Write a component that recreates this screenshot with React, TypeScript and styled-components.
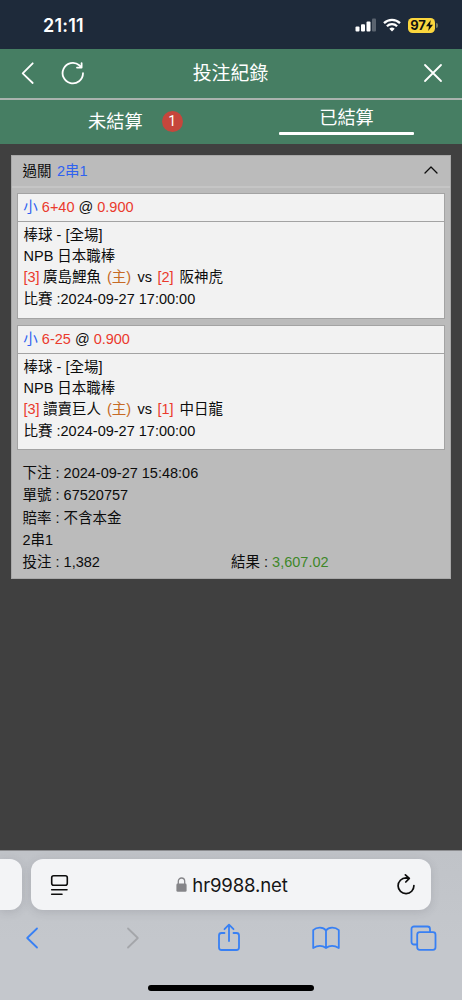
import React from "react";
import styled, { createGlobalStyle } from "styled-components";

const Global = createGlobalStyle`
  * { box-sizing: border-box; }
  body { margin: 0; background: #404040; }
`;

const Screen = styled.div`
  width: 462px;
  height: 1000px;
  display: flex;
  flex-direction: column;
  overflow: hidden;
  background: #404040;
  font-family: "Liberation Sans", "Noto Sans CJK TC", sans-serif;
  color: #0c0c0c;
`;

const StatusBar = styled.div`
  height: 49px;
  flex: none;
  display: flex;
  align-items: center;
  background: #1e2a3a;
  padding: 1px 24px 0 43px;
`;

const Clock = styled.span`
  flex: 1;
  color: #fff;
  font-family: Inter, sans-serif;
  font-size: 18px;
  font-weight: 600;
  letter-spacing: 0.2px;
`;

const SignalIcon = styled.svg`
  margin-right: 7px;
  flex: none;
`;

const Battery = styled.div`
  display: flex;
  align-items: center;
  justify-content: center;
  width: 27px;
  height: 15px;
  margin-left: 7px;
  border-radius: 4.5px;
  background: #fbd63d;
  color: #111;
  font: 700 13px Inter, sans-serif;
  letter-spacing: -0.2px;
`;

const Nub = styled.div`
  width: 2px;
  height: 5px;
  margin-left: 1px;
  border-radius: 0 2px 2px 0;
  background: #777b62;
`;

const NavBar = styled.header`
  height: 49px;
  flex: none;
  display: flex;
  align-items: center;
  gap: 26px;
  background: #467e63;
  padding: 0 19px 1px 21px;
`;

const NavTitle = styled.h1`
  flex: 1;
  margin: 0;
  padding: 2px 47px 0 0;
  text-align: center;
  color: #fff;
  font-size: 18.9px;
  font-weight: 400;
  line-height: 28px;
`;

const Tabs = styled.nav`
  height: 46px;
  flex: none;
  display: flex;
  background: #467e63;
  border-top: 2px solid #a9b3ae;
`;

const Tab = styled.div<{ $active?: boolean }>`
  width: 231px;
  display: flex;
  flex-direction: ${(p) => (p.$active ? "column" : "row")};
  align-items: ${(p) => (p.$active ? "center" : "flex-start")};
  padding: ${(p) => (p.$active ? "4px 0 0" : "8px 0 0 88px")};
  color: #fff;
  font-size: 18.2px;
  line-height: 28px;
`;

const Underline = styled.div`
  width: 135px;
  height: 3px;
  border-radius: 1px;
  background: #fff;
`;

const Badge = styled.span`
  width: 21px;
  height: 21px;
  margin: 3px 0 0 19px;
  border-radius: 50%;
  background: #c6463c;
  font: 14px/21px Roboto, sans-serif;
  text-align: center;
`;

const Panel = styled.main`
  margin: 11px 11px 0;
  height: 424px;
  flex: none;
  display: flex;
  flex-direction: column;
  background: #bbb;
  border: 1px solid #a8a8a8;
  font-size: 14.5px;
`;

const PanelHead = styled.div`
  height: 32px;
  flex: none;
  display: flex;
  align-items: center;
  justify-content: space-between;
  padding: 0 12px 2px 10.5px;
  border-bottom: 2px solid #c5c5c5;
  white-space: pre;
`;

const HeadLabel = styled.span`
  display: flex;
  gap: 5.5px;
  padding-bottom: 2px;
`;

const BetCard = styled.section`
  margin: 5px 5px 0;
  height: 126px;
  flex: none;
  background: #f2f2f2;
  border: 1px solid #a3a3a3;
  white-space: pre;
  & + & { margin-top: 6px; height: 125px; }
`;

const BetHead = styled.div`
  height: 28px;
  padding: 0 5.3px;
  border-bottom: 1px solid #a3a3a3;
  line-height: 27px;
`;

const BetBody = styled.div`
  padding: 3px 5.5px;
`;

const Line = styled.div<{ $h: number }>`
  display: flex;
  height: ${(p) => p.$h}px;
  line-height: ${(p) => p.$h}px;
`;

const tones = { red: "#ea3a2d", blue: "#2f62f0", orange: "#c66a25", green: "#3e8729" };

const Tint = styled.span<{ $tone: keyof typeof tones }>`
  color: ${(p) => tones[p.$tone]};
`;

const Seg = styled.span<{ $w: number }>`
  width: ${(p) => p.$w}px;
  flex: none;
`;

const Summary = styled.div`
  padding: 12px 10.5px 0;
  white-space: pre;
`;

const Browser = styled.footer`
  margin-top: auto;
  height: 150px;
  flex: none;
  display: flex;
  flex-direction: column;
  align-items: center;
  border-top: 1px solid #8c8d90;
  background: linear-gradient(#c0c3c8, #c4c7cc 60%);
`;

const AddressRow = styled.div`
  width: 462px;
  display: flex;
  gap: 9px;
  padding-top: 8px;
`;

const PreviousTab = styled.div`
  width: 22px;
  height: 51px;
  border-radius: 0 12px 12px 0;
  background: #f3f4f6;
  box-shadow: 0 2px 10px rgba(60, 65, 75, 0.16);
`;

const AddressBar = styled.div`
  width: 400px;
  height: 51px;
  display: flex;
  align-items: center;
  justify-content: space-between;
  padding: 0 15px 0 19px;
  border-radius: 12px;
  background: #f3f4f6;
  box-shadow: 0 2px 10px rgba(60, 65, 75, 0.16);
`;

const Host = styled.div`
  display: flex;
  align-items: center;
  gap: 5px;
  padding-right: 1px;
  color: #161616;
  font: 18.6px Inter, sans-serif;
  letter-spacing: -0.15px;
`;

const Toolbar = styled.div`
  width: 462px;
  height: 55px;
  display: grid;
  grid-template-columns: 64px 137px 56px 138px 57px;
  align-items: center;
  justify-items: center;
`;

const HomeIndicator = styled.div`
  width: 166px;
  height: 6px;
  margin-top: 20px;
  border-radius: 3px;
  background: #000;
`;

const Stroke = styled.svg`
  flex: none;
  fill: none;
  stroke: currentColor;
  stroke-linecap: round;
  stroke-linejoin: round;
`;

const BlueStroke = styled(Stroke)<{ $muted?: boolean }>`
  color: ${(p) => (p.$muted ? "#a4a6aa" : "#3880f4")};
  stroke-width: 1.8;
`;

const NavStroke = styled(Stroke)`
  color: #fff;
  stroke-width: 1.8;
`;

type Bet = { line: string; home: string; homeNo: number; away: string; awayNo: number };

const bets: Bet[] = [
  { line: "6+40", homeNo: 3, home: "廣島鯉魚", awayNo: 2, away: "阪神虎" },
  { line: "6-25", homeNo: 3, home: "讀賣巨人", awayNo: 1, away: "中日龍" },
];

function BetItem({ bet }: { bet: Bet }) {
  return (
    <BetCard>
      <BetHead>
        <Tint $tone="blue">小</Tint> <Tint $tone="red">{bet.line}</Tint> @ <Tint $tone="red">0.900</Tint>
      </BetHead>
      <BetBody>
        <Line $h={21.2}>棒球 - [全場]</Line>
        <Line $h={21.2}>NPB 日本職棒</Line>
        <Line $h={21.2}>
          <Seg $w={19.5}><Tint $tone="red">[{bet.homeNo}]</Tint></Seg>
          <Seg $w={64}>{bet.home}</Seg>
          <Seg $w={30.5}><Tint $tone="orange">(主)</Tint></Seg>
          <Seg $w={20}>vs</Seg>
          <Seg $w={22}><Tint $tone="red">[{bet.awayNo}]</Tint></Seg>
          {bet.away}
        </Line>
        <Line $h={21.2}>比賽 :2024-09-27 17:00:00</Line>
      </BetBody>
    </BetCard>
  );
}

export default function App() {
  return (
    <Screen>
      <Global />
      <StatusBar>
        <Clock>21:11</Clock>
        <SignalIcon width="21" height="14" viewBox="0 0 21 14" fill="#fff">
          <rect x="0.5" y="8.5" width="4" height="5" rx="1" />
          <rect x="6" y="6.2" width="4" height="7.3" rx="1" />
          <rect x="11.5" y="3.4" width="4" height="10.1" rx="1" />
          <rect x="17" y="0.5" width="4" height="13" rx="1" opacity="0.27" />
        </SignalIcon>
        <svg width="18" height="14" viewBox="0 0 18 14" fill="none" stroke="#fff" strokeWidth="2.3">
          <path d="M1 5.1a11.6 11.6 0 0 1 16 0" />
          <path d="M3.9 8.2a7.3 7.3 0 0 1 10.2 0" />
          <path d="M9 13.5 6.3 10.7a3.9 3.9 0 0 1 5.4 0z" fill="#fff" stroke="none" />
        </svg>
        <Battery>
          97
          <svg width="7" height="11" viewBox="0 0 7 11" fill="#111">
            <path d="M4.8 0 0 6.2h3L2.2 11 7 4.8H4z" />
          </svg>
        </Battery>
        <Nub />
      </StatusBar>
      <NavBar>
        <NavStroke width="14" height="24" viewBox="0 0 14 24">
          <path d="M11.7 2.3 1.7 12.4 11.7 22" />
        </NavStroke>
        <NavStroke width="24" height="24" viewBox="0 0 24 24">
          <path d="M22 12.2A10.2 10.2 0 1 1 18.3 4.3L20.3 6.2M20.6 2.2V6.6H16" />
        </NavStroke>
        <NavTitle>投注紀錄</NavTitle>
        <NavStroke width="20" height="20" viewBox="0 0 20 20">
          <path d="M2 2 18 18M18 2 2 18" />
        </NavStroke>
      </NavBar>
      <Tabs>
        <Tab>
          未結算
          <Badge>1</Badge>
        </Tab>
        <Tab $active>
          已結算
          <Underline />
        </Tab>
      </Tabs>
      <Panel>
        <PanelHead>
          <HeadLabel>
            <span>過關</span>
            <Tint $tone="blue">2串1</Tint>
          </HeadLabel>
          <Stroke width="14" height="8" viewBox="0 0 14 8" strokeWidth="1.3">
            <path d="M1 7 7 1 13 7" />
          </Stroke>
        </PanelHead>
        {bets.map((bet) => (
          <BetItem key={bet.line} bet={bet} />
        ))}
        <Summary>
          <Line $h={22.3}>下注 : 2024-09-27 15:48:06</Line>
          <Line $h={22.3}>單號 : 67520757</Line>
          <Line $h={22.3}>賠率 : 不含本金</Line>
          <Line $h={22.3}>2串1</Line>
          <Line $h={22.3}>
            <Seg $w={208.5}>投注 : 1,382</Seg>
            <span>
              結果 : <Tint $tone="green">3,607.02</Tint>
            </span>
          </Line>
        </Summary>
      </Panel>
      <Browser>
        <AddressRow>
          <PreviousTab />
          <AddressBar>
            <Stroke width="19" height="22" viewBox="0 0 19 22" strokeWidth="1.6">
              <rect x="1.7" y="1.8" width="15.6" height="9.4" rx="2" />
              <path d="M1.7 15.7H17M1.7 20.3H12" />
            </Stroke>
            <Host>
              <svg width="11" height="15" viewBox="0 0 11 15">
                <path d="M2.3 7V4.2a3.2 3.2 0 0 1 6.4 0V7" fill="none" stroke="#858589" strokeWidth="1.3" />
                <rect x="0.4" y="6.5" width="10.2" height="8.3" rx="1.4" fill="#858589" />
              </svg>
              hr9988.net
            </Host>
            <Stroke width="20" height="22" viewBox="0 0 20 22" strokeWidth="1.7">
              <path d="M17.9 11.6A7.9 7.9 0 1 1 10 3.9L13.2 4.2M9.4 0.9 13.3 4.3 9.8 8" />
            </Stroke>
          </AddressBar>
        </AddressRow>
        <Toolbar>
          <BlueStroke width="16" height="24" viewBox="0 0 16 24">
            <path d="M13 2.5 3.2 12 13 21.5" />
          </BlueStroke>
          <BlueStroke $muted width="16" height="24" viewBox="0 0 16 24">
            <path d="M3 2.5 12.8 12 3 21.5" />
          </BlueStroke>
          <BlueStroke width="24" height="30" viewBox="0 0 24 30">
            <path d="M7.5 10H4.5a2.5 2.5 0 0 0-2.5 2.5v12A2.5 2.5 0 0 0 4.5 27h15a2.5 2.5 0 0 0 2.5-2.5v-12a2.5 2.5 0 0 0-2.5-2.5h-3M12 18V2M7.5 6.2 12 1.7 16.5 6.2" />
          </BlueStroke>
          <BlueStroke width="28" height="24" viewBox="0 0 28 24">
            <path d="M14 22V4.5C11.3.9 4.8.8 1.2 4.2V22c4-2.4 9-2.8 12.8 0 3.8-2.8 8.8-2.4 12.8 0V4.2C23.2.8 16.7.9 14 4.5" />
          </BlueStroke>
          <BlueStroke width="27" height="26" viewBox="0 0 27 26">
            <path d="M7 19.5H4a2.5 2.5 0 0 1-2.5-2.5V4A2.5 2.5 0 0 1 4 1.5h13.5A2.5 2.5 0 0 1 20 4v3" />
            <rect x="7.2" y="7.2" width="18.3" height="17.6" rx="2.5" />
          </BlueStroke>
        </Toolbar>
        <HomeIndicator />
      </Browser>
    </Screen>
  );
}
